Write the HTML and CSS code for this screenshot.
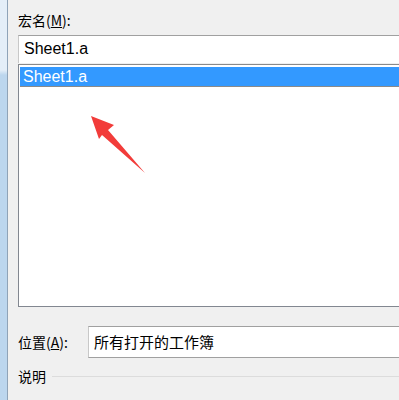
FILE: index.html
```html
<!DOCTYPE html>
<html lang="zh-CN">
<head>
  <meta charset="UTF-8" />
  <title>宏</title>
  <link rel="stylesheet" href="styles.css">
</head>
<body>
  <div class="window">
    <div class="frame"></div>
    <div class="dialog">
      <label class="label name-label">宏名(<u>M</u>):</label>
      <div class="name-input">Sheet1.a</div>

      <div class="macro-list">
        <div class="macro-item selected">Sheet1.a</div>
        <svg class="pointer" width="70" height="70" viewBox="0 0 70 70">
          <polygon points="2,1 25,10 19,15 56,58 13,20 10,24" fill="#f23c3a" />
        </svg>
      </div>

      <div class="location-row">
        <label class="label">位置(<u>A</u>):</label>
        <div class="location-box">所有打开的工作簿</div>
      </div>

      <div class="desc-row">
        <span class="label">说明</span>
        <span class="desc-line"></span>
      </div>
    </div>
  </div>
</body>
</html>
```

FILE: styles.css
```css
html, body {
  margin: 0;
  padding: 0;
  background: #f0f0f0;
  overflow: hidden;
}
body {
  font-family: "Noto Sans CJK SC", "Liberation Sans", sans-serif;
  color: #000;
}
.window {
  display: flex;
  height: 400px;
  width: 399px;
  overflow: hidden;
}
.frame {
  flex: 0 0 7px;
  background: linear-gradient(#e4eef8 0, #e4eef8 70px, #bcd6ee 75px, #bcd6ee 100%);
  border-right: 1px solid #8fa3b8;
}
.dialog {
  flex: 1;
  padding-left: 10px;
  min-width: 0;
}
.label {
  font-size: 14px;
  line-height: 20px;
}
.label u {
  text-decoration: underline;
}
.name-label {
  display: block;
  margin-top: 10px;
}
.name-input {
  margin-top: 5px;
  width: 420px;
  height: 28px;
  box-sizing: border-box;
  border-top: 1px solid #a0a0a0;
  border-left: 1px solid #c8c8c8;
  background: #fff;
  font-family: "Liberation Sans", sans-serif;
  font-size: 16px;
  line-height: 26px;
  padding-left: 5px;
}
.macro-list {
  position: relative;
  margin-top: 1px;
  width: 420px;
  height: 243px;
  box-sizing: border-box;
  border: 1px solid #828790;
  border-top-color: #8a8a8a;
  background: #fff;
  padding: 2px 0 0 1px;
}
.macro-item {
  font-family: "Liberation Sans", sans-serif;
  font-size: 16px;
  line-height: 19px;
  padding-left: 3px;
}
.macro-item.selected {
  background: #3399ff;
  color: #fff;
  border-bottom: 1px solid #8a8a8a;
}
.pointer {
  position: absolute;
  left: 70px;
  top: 50px;
}
.location-row {
  display: flex;
  align-items: center;
  margin-top: 19px;
}
.location-row .label {
  flex: 0 0 70px;
}
.location-box {
  flex: 0 0 330px;
  height: 32px;
  box-sizing: border-box;
  border-top: 1px solid #a0a0a0;
  border-bottom: 1px solid #a0a0a0;
  border-left: 1px solid #c8c8c8;
  background: #fff;
  font-size: 15px;
  line-height: 30px;
  padding-left: 5px;
}
.desc-row {
  display: flex;
  align-items: center;
  margin-top: 8px;
}
.desc-line {
  flex: 1;
  height: 1px;
  background: #dcdcdc;
  margin-left: 6px;
}
```
